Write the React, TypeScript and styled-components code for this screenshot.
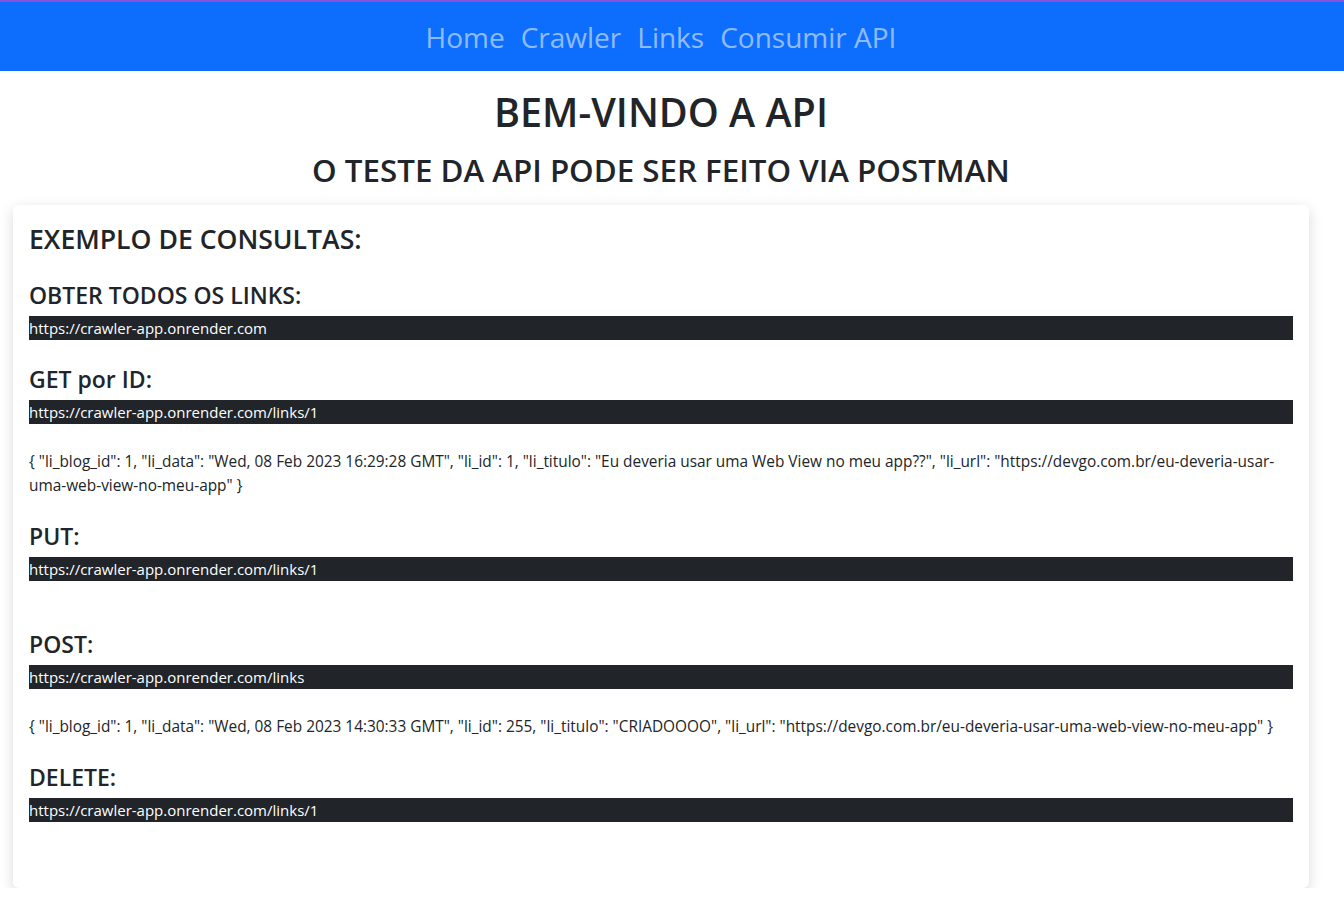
import React from 'react'
import styled, { createGlobalStyle } from 'styled-components'

const GlobalStyle = createGlobalStyle`
  * { box-sizing: border-box; }
  body {
    margin: 0;
    background: #FFFFFF;
    color: #212529;
    font-family: "Open Sans", "Noto Sans", sans-serif;
  }
`

const NavBar = styled.nav`
  height: 71px;
  padding-right: 22px;
  background: #0D6EFD;
  border-top: 2px solid #8A4FD8;
  display: flex;
  align-items: center;
  justify-content: center;
  gap: 16px;
`

const NavLink = styled.a`
  color: rgba(255, 255, 255, 0.55);
  font-size: 28px;
  text-decoration: none;
`

const Page = styled.main`
  padding-right: 22px;
`

const Heading = styled.h1`
  margin: 18px 0 0;
  text-align: center;
  font-size: 39.5px;
  font-weight: 600;
  line-height: 46px;
`

const SubHeading = styled.h2`
  margin: 17px 0 0;
  text-align: center;
  font-size: 31.3px;
  font-weight: 600;
  line-height: 36px;
`

const Card = styled.section`
  margin: 17px 13px 0;
  padding: 16px 16px 66px;
  border-radius: 6px;
  background: #FFFFFF;
  box-shadow: 0 4px 14px rgba(0, 0, 0, 0.15);
  display: flex;
  flex-direction: column;
`

const CardTitle = styled.h3`
  margin: 1px 0 24px;
  font-size: 26.6px;
  font-weight: 600;
  line-height: 34px;
`

const Method = styled.h4`
  margin: 0 0 6px;
  font-size: 23px;
  font-weight: 600;
  line-height: 30px;
`

const Endpoint = styled.p<{ gap: number }>`
  margin: 0 0 ${(p) => p.gap}px;
  background: #212529;
  color: #FFFFFF;
  font-size: 15px;
  line-height: 24px;
`

const Payload = styled.p`
  margin: 0 0 23px;
  font-size: 15.4px;
  line-height: 24px;
`

type Query = { method: string; url: string; body?: string; gap: number }

const queries: Query[] = [
  { method: 'OBTER TODOS OS LINKS:', url: 'https://crawler-app.onrender.com', gap: 24 },
  {
    method: 'GET por ID:',
    url: 'https://crawler-app.onrender.com/links/1',
    body: '{ "li_blog_id": 1, "li_data": "Wed, 08 Feb 2023 16:29:28 GMT", "li_id": 1, "li_titulo": "Eu deveria usar uma Web View no meu app??", "li_url": "https://devgo.com.br/eu-deveria-usar-uma-web-view-no-meu-app" }',
    gap: 26,
  },
  { method: 'PUT:', url: 'https://crawler-app.onrender.com/links/1', gap: 48 },
  {
    method: 'POST:',
    url: 'https://crawler-app.onrender.com/links',
    body: '{ "li_blog_id": 1, "li_data": "Wed, 08 Feb 2023 14:30:33 GMT", "li_id": 255, "li_titulo": "CRIADOOOO", "li_url": "https://devgo.com.br/eu-deveria-usar-uma-web-view-no-meu-app" }',
    gap: 26,
  },
  { method: 'DELETE:', url: 'https://crawler-app.onrender.com/links/1', gap: 0 },
]

const App: React.FC = () => {
  return (
    <>
      <GlobalStyle />
      <NavBar>
        <NavLink href="#">Home</NavLink>
        <NavLink href="#">Crawler</NavLink>
        <NavLink href="#">Links</NavLink>
        <NavLink href="#">Consumir API</NavLink>
      </NavBar>
      <Page>
        <Heading>BEM-VINDO A API</Heading>
        <SubHeading>O TESTE DA API PODE SER FEITO VIA POSTMAN</SubHeading>
        <Card>
          <CardTitle>EXEMPLO DE CONSULTAS:</CardTitle>
          {queries.map((q) => (
            <React.Fragment key={q.method}>
              <Method>{q.method}</Method>
              <Endpoint gap={q.gap}>{q.url}</Endpoint>
              {q.body && <Payload>{q.body}</Payload>}
            </React.Fragment>
          ))}
        </Card>
      </Page>
    </>
  )
}

export default App
